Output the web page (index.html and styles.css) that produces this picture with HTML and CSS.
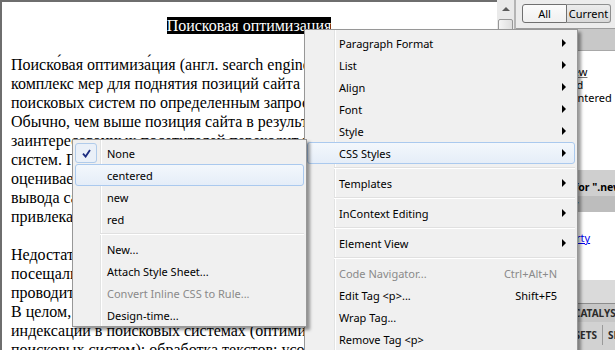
FILE: index.html
```html
<!DOCTYPE html>
<html lang="ru">
<head>
    <meta charset="UTF-8">
    <meta name="viewport" content="width=device-width, initial-scale=1.0">
    <title>Поисковая оптимизация</title>
    <link rel="stylesheet" href="styles.css">
</head>
<body>
    <div class="workspace">
        <div class="document">
            <h1 class="doc-title"><span class="selected">Поисковая оптимизация</span></h1>
            <p>Поиско́вая оптимиза́ция (англ. search engine optimization, SEO) —<br>
            комплекс мер для поднятия позиций сайта в результатах выдачи<br>
            поисковых систем по определенным запросам пользователей.<br>
            Обычно, чем выше позиция сайта в результатах поиска, тем больше<br>
            заинтересованных посетителей переходит на него с поисковых<br>
            систем. При анализе эффективности поисковой оптимизации<br>
            оценивается стоимость целевого посетителя с учётом времени<br>
            вывода сайта на указанные позиции и конверсии сайта, на который<br>
            привлекаются посетители.</p>
            <p>Недостаток поисковой оптимизации — необходимость, чтобы сайт<br>
            посещали пользователи, заинтересованные в его услугах, поэтому<br>
            проводится анализ запросов и подбор ключевых слов.<br>
            В целом, поисковая оптимизация включает подготовку сайта к<br>
            индексации в поисковых системах (оптимизация структуры и кода для<br>
            поисковых систем): обработка текстов; усовершенствование ссылок.</p>
        </div>
        <div class="vscroll">
            <div class="scroll-btn"><span class="arrow-up"></span></div>
            <div class="scroll-thumb"></div>
        </div>
        <div class="panel">
            <div class="panel-toolbar">
                <button class="seg active">All</button><button class="seg">Current</button>
            </div>
            <div class="panel-head">All Rules</div>
            <ul class="rules">
                <li class="focused">new</li>
                <li>red</li>
                <li>centered</li>
            </ul>
            <div class="props-head">Properties for ".new"</div>
            <div class="prop-row">font-family</div>
            <div class="props-body"><a href="#">Add Property</a></div>
            <div class="panel-footer">
                <span class="tool-btn">
                    <svg width="9" height="17" viewBox="0 0 9 17"><rect x="0.5" y="0.5" width="8" height="16" rx="2" fill="#f4f4f4" stroke="#6b6b6b"/><path d="M4.5 4v8M2.5 9.5l2 3 2-3" fill="none" stroke="#c8202a" stroke-width="1.2"/></svg>
                </span>
            </div>
            <div class="group-head">BUSINESS CATALYST</div>
            <div class="tabs">
                <span class="tab">FILES</span><span class="tab">ASSETS</span><span class="tab">SNIPPETS</span>
            </div>
        </div>
    </div>

    <div class="menu context-menu">
        <div class="item">Paragraph Format<span class="sub"></span></div>
        <div class="item">List<span class="sub"></span></div>
        <div class="item">Align<span class="sub"></span></div>
        <div class="item">Font<span class="sub"></span></div>
        <div class="item">Style<span class="sub"></span></div>
        <div class="item hover">CSS Styles<span class="sub"></span></div>
        <div class="sep"></div>
        <div class="item">Templates<span class="sub"></span></div>
        <div class="sep"></div>
        <div class="item">InContext Editing<span class="sub"></span></div>
        <div class="sep"></div>
        <div class="item">Element View<span class="sub"></span></div>
        <div class="sep"></div>
        <div class="item disabled">Code Navigator...<span class="key">Ctrl+Alt+N</span></div>
        <div class="item">Edit Tag &lt;p&gt;...<span class="key">Shift+F5</span></div>
        <div class="item">Wrap Tag...</div>
        <div class="item">Remove Tag &lt;p&gt;</div>
        <div class="sep"></div>
        <div class="item">Make Link</div>
    </div>

    <div class="menu submenu">
        <div class="item"><span class="check"><svg width="9" height="9" viewBox="0 0 9 9"><path d="M1 4.6l2.6 3 4.4-6.6" fill="none" stroke="#1c2c80" stroke-width="1.8"/></svg></span>None</div>
        <div class="item hover">centered</div>
        <div class="item">new</div>
        <div class="item">red</div>
        <div class="sep"></div>
        <div class="item">New...</div>
        <div class="item">Attach Style Sheet...</div>
        <div class="item disabled">Convert Inline CSS to Rule...</div>
        <div class="item">Design-time...</div>
    </div>
</body>
</html>
```

FILE: styles.css
```css
html,
body {
    margin: 0;
    padding: 0;
}
body {
    position: relative;
    width: 615px;
    height: 350px;
    overflow: hidden;
    font-family: "Noto Sans", Arial, sans-serif;
    background-color: #d4d4d4;
}
.workspace {
    display: flex;
    height: 350px;
}

/* design view */
.document {
    flex: 0 0 497px;
    box-sizing: border-box;
    border-top: 2px solid #6e6e6e;
    border-left: 2px solid #6e6e6e;
    padding: 0 10px 0 9px;
    background-color: #fff;
    font-family: "Liberation Serif", "Times New Roman", serif;
    font-size: 16px;
    line-height: 19px;
    white-space: nowrap;
    overflow: hidden;
}
.doc-title {
    margin: 14px 0 0;
    font-size: 16px;
    font-weight: normal;
    text-align: center;
}
.selected {
    background-color: #000;
    color: #fff;
}
.document p {
    margin: 20px 0 0;
}
.document p + p {
    margin-top: 19px;
}

/* scrollbar */
.vscroll {
    flex: 0 0 17px;
    display: flex;
    flex-direction: column;
    align-items: center;
    background-color: #eaeaea;
}
.scroll-btn {
    width: 17px;
    height: 17px;
    display: flex;
    align-items: center;
    justify-content: center;
}
.arrow-up {
    width: 0;
    height: 0;
    border-left: 4px solid transparent;
    border-right: 4px solid transparent;
    border-bottom: 4px solid #5c5c5c;
}
.scroll-thumb {
    width: 15px;
    height: 60px;
    margin-top: 2px;
    box-sizing: border-box;
    border: 1px solid #979797;
    border-radius: 2px;
    background: linear-gradient(90deg, #f4f4f4, #dedede);
}

/* css styles panel */
.panel {
    flex: 1;
    display: flex;
    flex-direction: column;
    border-left: 2px solid #b5b5b5;
    font-size: 11px;
    color: #000;
}
.panel-toolbar {
    flex: 0 0 29px;
    box-sizing: border-box;
    display: flex;
    align-items: flex-start;
    padding: 4px 0 0 6px;
    background-color: #ececec;
    border-bottom: 1px solid #9d9d9d;
}
.seg {
    height: 19px;
    padding: 0;
    font-family: "Noto Sans", Arial, sans-serif;
    font-size: 11px;
    color: #000;
    border: 1px solid #8e8f8f;
    background: linear-gradient(#ececec, #d9d9d9);
}
.seg.active {
    width: 45px;
    border-radius: 3px 0 0 3px;
    border-color: #707070;
    background: linear-gradient(#fbfbfb, #f0f0f0);
}
.seg + .seg {
    width: 44px;
    border-left: none;
    border-radius: 0 3px 3px 0;
}
.panel-head {
    flex: 0 0 22px;
    box-sizing: border-box;
    padding: 3px 6px;
    background-color: #c8c8c8;
    border-bottom: 1px solid #a8a8a8;
    font-weight: bold;
}
.rules {
    flex: 0 0 119px;
    box-sizing: border-box;
    margin: 0;
    padding: 14px 0 0 50px;
    list-style: none;
    background-color: #fff;
    line-height: 13px;
    white-space: nowrap;
    overflow: hidden;
}
.rules .focused {
    text-decoration: underline;
    text-decoration-color: #777;
}
.props-head {
    flex: 0 0 26px;
    box-sizing: border-box;
    padding: 10px 0 0 1px;
    background-color: #cfcfcf;
    font-weight: bold;
    font-size: 10.5px;
    white-space: nowrap;
    overflow: hidden;
}
.prop-row {
    flex: 0 0 16px;
    padding-left: 6px;
    background-color: #bdbdbd;
    line-height: 16px;
}
.props-body {
    flex: 0 0 68px;
    box-sizing: border-box;
    padding: 18px 0 0 6px;
    background-color: #fff;
}
.props-body a {
    color: #0000ee;
}
.panel-footer {
    flex: 0 0 23px;
    box-sizing: border-box;
    display: flex;
    justify-content: flex-end;
    padding: 2px 27px 0 0;
    background-color: #dadada;
}
.tool-btn {
    display: flex;
}
.group-head {
    flex: 0 0 19px;
    box-sizing: border-box;
    padding: 2px 0 0 7px;
    border-top: 1px solid #8c8c8c;
    background-color: #c6c6c6;
    color: #2b2b2b;
    font-size: 10px;
    font-weight: bold;
    white-space: nowrap;
    overflow: hidden;
}
.tabs {
    flex: 1;
    display: flex;
    align-items: flex-start;
    padding: 3px 0 0 4px;
    background-color: #d2d2d2;
    white-space: nowrap;
    overflow: hidden;
}
.tab {
    padding: 3px 5px;
    border-right: 1px solid #9a9a9a;
    color: #2b2b2b;
    font-size: 10px;
    font-weight: bold;
}

/* context menus */
.menu {
    --gutter: 29px;
    position: absolute;
    box-sizing: border-box;
    border: 1px solid #979797;
    padding: 2px;
    font-size: 11px;
    color: #000;
    box-shadow: 3px 3px 3px rgba(0, 0, 0, 0.4);
    background: linear-gradient(90deg,
        #f0f0f0 var(--gutter),
        #e2e3e3 var(--gutter), #e2e3e3 calc(var(--gutter) + 1px),
        #fff calc(var(--gutter) + 1px), #fff calc(var(--gutter) + 2px),
        #f0f0f0 calc(var(--gutter) + 2px));
}
.context-menu {
    left: 304px;
    top: 29px;
    width: 274px;
    z-index: 1;
}
.submenu {
    --gutter: 27px;
    left: 72px;
    top: 139px;
    width: 235px;
    padding-bottom: 0;
    z-index: 2;
}
.item {
    position: relative;
    display: flex;
    align-items: center;
    height: 22px;
    box-sizing: border-box;
    padding: 0 8px 0 31px;
    border: 1px solid transparent;
    border-radius: 3px;
    white-space: nowrap;
}
.item.hover {
    border-color: #aac9ee;
    background: linear-gradient(#f3f7fc, #e5edf8);
}
.item.disabled {
    color: #8a8a8a;
}
.sub {
    margin-left: auto;
    width: 0;
    height: 0;
    border-left: 4px solid #000;
    border-top: 4px solid transparent;
    border-bottom: 4px solid transparent;
}
.key {
    margin-left: auto;
    margin-right: 9px;
}
.sep {
    margin: 3px 0 3px calc(var(--gutter) - 2px);
    border-top: 1px solid #e0e0e0;
    border-bottom: 1px solid #fff;
}
.check {
    position: absolute;
    left: -1px;
    top: 0;
    width: 22px;
    height: 20px;
    box-sizing: border-box;
    display: flex;
    align-items: center;
    justify-content: center;
    border: 1px solid #b0cbea;
    border-radius: 3px;
    background-color: #eaf0f8;
}
```
